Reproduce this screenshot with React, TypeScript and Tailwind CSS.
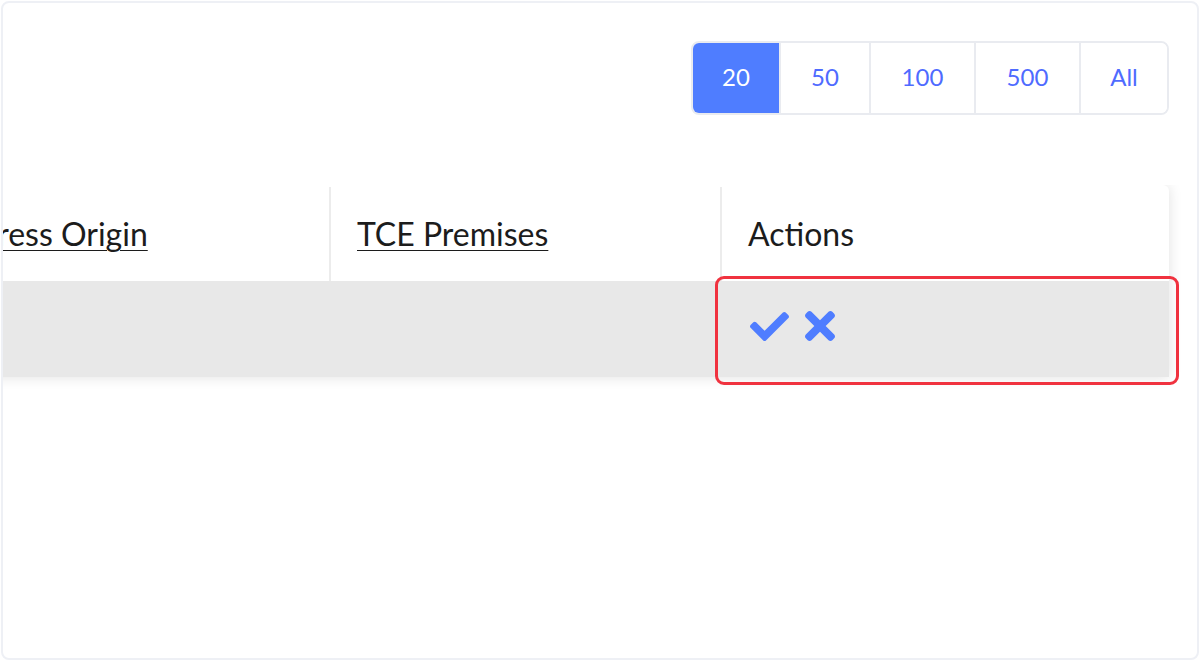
import React, { useState } from 'react';
import { FaCheck, FaTimes } from 'react-icons/fa';

const pageSizes = ['20', '50', '100', '500', 'All'];

const columns = [
  { id: 'origin', label: 'Address Origin', width: 'w-[413px] pl-[24px] pr-[26px]', sortable: true },
  { id: 'premises', label: 'TCE Premises', width: 'w-[391px] px-[26px]', sortable: true },
  { id: 'actions', label: 'Actions', width: 'flex-1 px-[26px]', sortable: false },
];

export default function App() {
  const [pageSize, setPageSize] = useState('20');

  return (
    <div
      className="h-[661px] w-[1200px] bg-white p-px"
      style={{ fontFamily: 'Lato, "Open Sans", sans-serif' }}
    >
      <div className="flex h-full flex-col rounded-lg border-2 border-[#eef0f5] bg-white pt-[38px]">
        {/* Page size selector */}
        <div className="flex justify-end pr-[28px]">
          <div className="flex h-[74px] overflow-hidden rounded-lg border-2 border-[#e9ebf0]">
            {pageSizes.map((size, i) => {
              const active = size === pageSize;
              return (
                <button
                  key={size}
                  onClick={() => setPageSize(size)}
                  className={`flex items-center justify-center pb-[2px] text-[24px] ${
                    i > 0 ? 'border-l-2 border-[#e9ebf0]' : ''
                  } ${
                    active ? 'bg-[#4f7dff] text-white' : 'bg-white text-[#4f6bff]'
                  } ${
                    size === '20' ? 'w-[86px]' : size === '50' ? 'w-[90px]' : size === 'All' ? 'w-[88px]' : 'w-[105px]'
                  }`}
                >
                  {size}
                </button>
              );
            })}
          </div>
        </div>

        {/* Table, scrolled horizontally so the first column is cut at the left */}
        <div className="mt-[70px] overflow-hidden pb-6 pr-[28px]">
          <div className="-ml-[87px] rounded-tr-md bg-white shadow-[0_0_14px_rgba(0,0,0,0.12)]">
            <div className="flex h-[96px] pt-[2px] text-[32px] text-[#1c1c1c]">
              {columns.map((col, i) => (
                <div
                  key={col.id}
                  className={`${col.width} flex items-center ${
                    i > 0 ? 'border-l-2 border-[#ececec]' : ''
                  }`}
                >
                  <span className={col.sortable ? 'underline underline-offset-4 decoration-1' : ''}>
                    {col.label}
                  </span>
                </div>
              ))}
            </div>
            <div className="flex h-[96px] bg-[#e8e8e8]">
              <div className="w-[413px]" />
              <div className="w-[391px]" />
              <div className="relative flex flex-1 items-center gap-[16px] px-[30px] pb-[6px] text-[#4f7dff]">
                <FaCheck className="h-[39px] w-[39px]" />
                <FaTimes className="h-[44px] w-[30px]" />
                <div className="pointer-events-none absolute -left-[5px] -right-[10px] -top-[5px] -bottom-[8px] rounded-[9px] border-[3px] border-[#f0323f]" />
              </div>
            </div>
          </div>
        </div>
      </div>
    </div>
  );
}
